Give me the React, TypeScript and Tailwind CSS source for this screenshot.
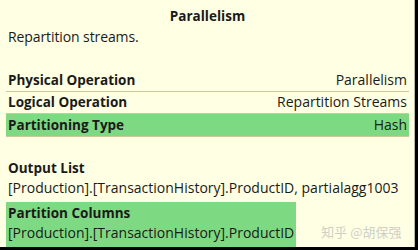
const Row = ({ label, value, green }: { label: string; value: string; green?: boolean }) => (
  <div
    className={`flex items-center justify-between h-[22.5px] px-[2px] border-b border-[#cfc99a] ${
      green ? "bg-[#7dd982]" : ""
    }`}
  >
    <span className="font-bold text-[13.5px]">{label}</span>
    <span>{value}</span>
  </div>
);

export default function App() {
  return (
    <div className="w-[418px] h-[250px] bg-[#ffffe3] text-[#1a1a1a] text-[14px] leading-[18px] overflow-hidden relative border-r-[3px] border-b-[3px] border-black font-['Open_Sans',sans-serif]">
      <div className="pl-[6px] pr-[5px] border-r border-[#b8b8a8] h-full">
        <div className="text-center font-bold text-[13.5px] pt-[7px]">Parallelism</div>
        <div className="pl-[2px] mt-[3px] tracking-[-0.1px]">Repartition streams.</div>

        <div className="mt-[23px]">
          <Row label="Physical Operation" value="Parallelism" />
          <Row label="Logical Operation" value="Repartition Streams" />
          <Row label="Partitioning Type" value="Hash" green />
        </div>

        <div className="mt-[22px] pl-[2px] whitespace-nowrap">
          <div className="font-bold text-[13.5px]">Output List</div>
          <div className="mt-[2px]">[Production].[TransactionHistory].ProductID, partialagg1003</div>
        </div>

        <div className="mt-[5px] flex items-end whitespace-nowrap">
          <div className="shrink-0 bg-[#7dd982] px-[2px] pt-[2px] pb-[5px]">
            <div className="font-bold text-[13.5px]">Partition Columns</div>
            <div className="mt-[2px]">[Production].[TransactionHistory].ProductID</div>
          </div>
          <div className="shrink-0 ml-[25px] mb-[7px] text-[#cfcfc6] text-[13px] leading-[16px] font-['Noto_Sans_CJK_SC',sans-serif]">
            知乎 @胡保强
          </div>
        </div>
      </div>
    </div>
  );
}
